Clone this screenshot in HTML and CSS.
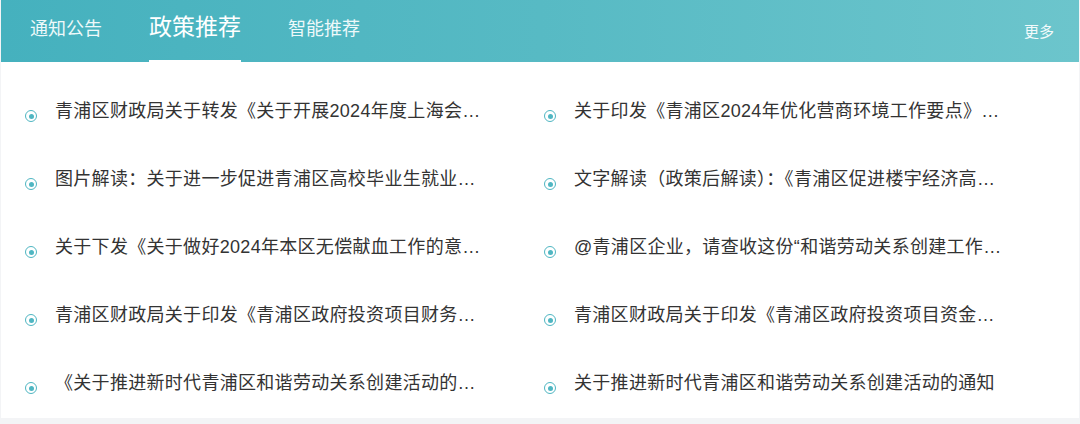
FILE: index.html
```html
<!DOCTYPE html>
<html lang="zh-CN">
<head>
<meta charset="utf-8">
<title>政策推荐</title>
<link rel="stylesheet" href="styles.css">
</head>
<body>
<div class="card">
  <div class="header">
    <div class="tabs">
      <div class="tab">通知公告</div>
      <div class="tab active">政策推荐</div>
      <div class="tab">智能推荐</div>
    </div>
    <div class="more">更多</div>
  </div>
  <div class="list">
    <div class="item"><span class="dot"></span><span class="text">青浦区财政局关于转发《关于开展2024年度上海会计专业技术人员继续教育工作的通知》</span></div>
    <div class="item"><span class="dot"></span><span class="text">关于印发《青浦区2024年优化营商环境工作要点》的通知</span></div>
    <div class="item"><span class="dot"></span><span class="text">图片解读：关于进一步促进青浦区高校毕业生就业创业的若干措施</span></div>
    <div class="item"><span class="dot"></span><span class="text">文字解读（政策后解读）：《青浦区促进楼宇经济高质量发展的若干意见》</span></div>
    <div class="item"><span class="dot"></span><span class="text">关于下发《关于做好2024年本区无偿献血工作的意见》的通知</span></div>
    <div class="item"><span class="dot"></span><span class="text">@青浦区企业，请查收这份“和谐劳动关系创建工作指引”</span></div>
    <div class="item"><span class="dot"></span><span class="text">青浦区财政局关于印发《青浦区政府投资项目财务管理办法》的通知</span></div>
    <div class="item"><span class="dot"></span><span class="text">青浦区财政局关于印发《青浦区政府投资项目资金管理办法》的通知</span></div>
    <div class="item"><span class="dot"></span><span class="text">《关于推进新时代青浦区和谐劳动关系创建活动的通知》政策解读</span></div>
    <div class="item"><span class="dot"></span><span class="text">关于推进新时代青浦区和谐劳动关系创建活动的通知</span></div>
  </div>
</div>
</body>
</html>
```

FILE: styles.css
```css
html, body {
  margin: 0;
  padding: 0;
}
body {
  width: 1080px;
  height: 424px;
  background: #f3f4f6;
  font-family: "Liberation Sans", "Noto Sans CJK SC", sans-serif;
  overflow: hidden;
}
.card {
  margin: 0 1px;
  height: 418px;
  background: #ffffff;
}
.header {
  height: 62px;
  background: linear-gradient(90deg, #45b1be 0%, #57bac4 50%, #6cc5cc 100%);
  display: flex;
  align-items: stretch;
  justify-content: space-between;
  padding: 0 25px 0 29px;
  color: #ffffff;
}
.tabs {
  display: flex;
  gap: 47px;
  align-items: stretch;
}
.tab {
  display: flex;
  align-items: center;
  font-size: 18px;
  line-height: 1;
  padding-bottom: 2px;
  color: #eef9fa;
  border-bottom: 2px solid transparent;
  box-sizing: border-box;
}
.tab.active {
  font-size: 23px;
  color: #ffffff;
  border-bottom-color: #ffffff;
  padding-bottom: 6px;
}
.more {
  display: flex;
  align-items: center;
  font-size: 15px;
  padding-bottom: 2px;
  color: #f2fafb;
}
.list {
  display: grid;
  grid-template-columns: 519px 519px;
  grid-auto-rows: 68px;
  padding: 15px 0 0 24px;
}
.item {
  display: flex;
  align-items: center;
  gap: 18px;
  color: #333333;
}
.dot {
  flex: none;
  width: 12px;
  height: 12px;
  box-sizing: border-box;
  border: 1.5px solid #4fb6c2;
  border-radius: 50%;
  margin-top: 10px;
  display: flex;
  align-items: center;
  justify-content: center;
}
.dot::after {
  content: "";
  width: 5px;
  height: 5px;
  border-radius: 50%;
  background: #4fb6c2;
}
.text {
  width: 428px;
  font-size: 18px;
  line-height: 24px;
  letter-spacing: 0.3px;
  white-space: nowrap;
  overflow: hidden;
  text-overflow: ellipsis;
}
```
